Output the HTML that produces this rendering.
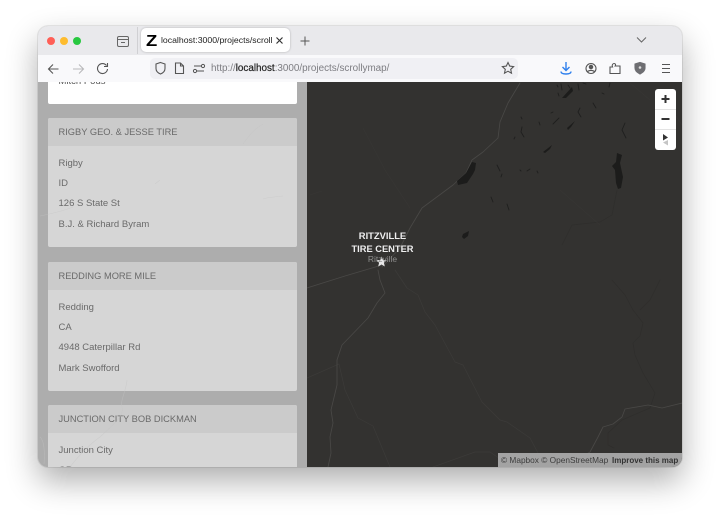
<!DOCTYPE html>
<html><head><meta charset="utf-8">
<style>
html,body{margin:0;padding:0;width:720px;height:517px;background:#fff;overflow:hidden;font-family:"Liberation Sans",sans-serif}
.win{position:absolute;left:38px;top:26px;width:644px;height:441px;border-radius:10px;box-shadow:0 0 0 1px rgba(0,0,0,.08),0 14px 32px rgba(0,0,0,.32)}
.clip{position:absolute;left:38px;top:26px;width:644px;height:441px;border-radius:10px;overflow:hidden;background:#adadad}
.abs{position:absolute}
.tabbar{position:absolute;left:0;top:0;width:644px;height:29px;background:#e9e9ec}
.nav{position:absolute;left:0;top:29px;width:644px;height:27px;background:#f9f9fb}
.dot{position:absolute;top:10.5px;width:8.5px;height:8.5px;border-radius:50%}
.tab{position:absolute;left:103px;top:2px;width:149px;height:24px;background:#fff;border-radius:5px;box-shadow:0 0 2px rgba(0,0,0,.25)}
.urlbar{position:absolute;left:112px;top:32px;width:368px;height:21px;background:#f0f0f4;border-radius:5px}
.left{position:absolute;left:0;top:56px;width:269px;height:385px;background:#adadad;overflow:hidden}
.map{position:absolute;left:269px;top:56px;width:375px;height:385px;background:#333230;overflow:hidden}
.card{position:absolute;left:10px;width:249px;height:129px;background:#d6d6d6;border-radius:2px;color:#6a6a6a;font-size:9.5px;overflow:hidden}
.card .h{height:28px;background:#cbcbcb;line-height:29.5px;padding-left:10.5px;font-size:9.3px;white-space:nowrap}
.card .r{position:absolute;left:10.5px;white-space:nowrap;line-height:12px}
</style></head><body>
<div class="win"></div>
<div class="clip">
  <div class="left">
    <div class="abs" style="left:10px;top:-20px;width:249px;height:42px;background:#fff;border-radius:2px"></div>
    <div class="abs" style="left:20.5px;top:-6px;font-size:9.5px;color:#555;line-height:12px">Mitch Pods</div>
    <div class="card" style="top:36px"><div class="h">RIGBY GEO. &amp; JESSE TIRE</div>
      <div class="r" style="top:39.5px">Rigby</div><div class="r" style="top:59.5px">ID</div><div class="r" style="top:80px">126 S State St</div><div class="r" style="top:100.5px">B.J. &amp; Richard Byram</div></div>
    <div class="card" style="top:180px"><div class="h">REDDING MORE MILE</div>
      <div class="r" style="top:39.5px">Redding</div><div class="r" style="top:59.5px">CA</div><div class="r" style="top:80px">4948 Caterpillar Rd</div><div class="r" style="top:100.5px">Mark Swofford</div></div>
    <div class="card" style="top:323px"><div class="h">JUNCTION CITY BOB DICKMAN</div>
      <div class="r" style="top:39.5px">Junction City</div><div class="r" style="top:59.5px">OR</div></div>
    <svg class="abs" style="left:0;top:0" width="269" height="385" fill="none" stroke="#c4c4c4" stroke-width=".6" opacity=".5">
      <path d="M2 134C12 132 25 129 35 125M205 62C210 55 215 48 225 42M225 117C230 115 238 115 245 114M122 98L117 102"/>
      <path d="M89 298C88 310 82 318 84 325C87 335 72 345 62 355C52 362 42 372 32 385M2 355C6 358 7 370 6 382"/>
    </svg>
  </div>
  <div class="map">
    <svg class="abs" style="left:-307px;top:-82px" width="720" height="517" fill="none" stroke-linejoin="round" stroke-linecap="round">
      <g stroke="#2f2e2c" stroke-width=".7">
        <path d="M612 280L625 295L633 310L643 323L640 336L633 343L635 355L643 373L655 393L650 408L622 420L608 433L608 445L614 448"/>
        <path d="M660 280L650 300L640 310M617 190L612 215L600 222L572 225L562 245"/>
      </g>
      <g stroke="#373634" stroke-width=".7">
        <path d="M410 208L385 170L363 128M310 195L322 191M630 83L650 100M672 110L682 125M560 190L600 225"/>
      </g>
      <g stroke="#3c3b39" stroke-width=".7">
        <path d="M395 270L407 288L418 295L425 312L435 325L455 362L463 365L482 402L500 420L507 422L530 438L538 453"/>
        <path d="M307 378L339 364L345 390L358 418L373 426L390 467"/>
        <path d="M433 467L475 452L490 452L503 461L520 459"/>
      </g>
      <g stroke="#494846" stroke-width=".85">
        <path d="M520 83L508 103L500 122L498 138L483 152L472 160L466 173L453 185L422 208L410 228L400 248L382 267"/>
        <path d="M382 265L345 276L307 288"/>
        <path d="M378 270L380 280L385 293L377 303L368 318L342 345L337 360L337 385L331 410L333 423L330 437L331 453L328 467"/>
        <path d="M682 403L662 408L648 405L625 409L622 417L613 424L603 427L598 437L590 452L580 458"/>
      </g>
      <g fill="#1c1c1b" stroke="none">
        <path d="M472 162L476 163L475 170L473 174L467 183L458 185L457 181L466 173Z"/>
        <path d="M617 153L622 155L620 163L623 177L621 188L618 189L616 183L615 170L612 166L616 162Z"/>
        <path d="M463 234L469 231L468 236L464 239L462 237Z"/>
        <path d="M543 152L552 145L550 149L545 153Z"/>
        <path d="M567 128L575 121L571 127L568 130Z"/>
        <path d="M562 98L572 87L573 91L566 98Z"/>
      </g>
      <g stroke="#1f1f1e" stroke-width=".9">
        <path d="M551 113L553 112M580 108L578 112L581 117M593 103L596 108M553 124L559 118"/>
        <path d="M625 123L622 130L626 138M521 117L522 119M539 122L540 125M522 127L521 132L524 137M514 139L515 137"/>
        <path d="M497 165L500 171M502 174L501 177M520 170L521 171M527 171L530 169M537 171L538 173M491 197L493 202M507 204L509 210"/>
        <path d="M557 85L558 87M561 84L562 90M568 85L570 88M578 84L579 90M583 83L586 84M610 83L609 87M602 93L604 94M558 93L559 96"/>
      </g>
      <path d="M381.500 256.500l1.500 3.500 3.800 .3-2.900 2.500 .9 3.700-3.300-2-3.300 2 .9-3.700-2.900-2.500 3.800-.3z" fill="#e8e8e8"/>
      <g font-family="Liberation Sans, DejaVu Sans, sans-serif" text-anchor="middle">
        <text x="382.500" y="262" font-size="8.500" fill="#8d8d8c">Ritzville</text>
        <text x="382.500" y="239" font-size="9.400" font-weight="bold" fill="#efefef">RITZVILLE</text>
        <text x="382.500" y="252" font-size="9.300" font-weight="bold" fill="#efefef">TIRE CENTER</text>
      </g>
    </svg>
    <div class="abs" style="left:348px;top:7px;width:21px;height:61px;background:#fff;border-radius:3px"></div>
    <div class="abs" style="left:348px;top:27px;width:21px;height:1px;background:#e3e3e3"></div>
    <div class="abs" style="left:348px;top:47px;width:21px;height:1px;background:#e3e3e3"></div>
    <svg class="abs" style="left:348px;top:7px" width="21" height="61">
      <path d="M6.500 10h8M10.500 6v8M6.500 30h8" stroke="#333" stroke-width="2"/>
      <path d="M8 45l5 3.500-5 3z" fill="#333"/>
      <path d="M13 51v5.500l-5-3z" fill="#c5c5c5"/>
    </svg>
    <div class="abs" style="left:191px;top:371px;width:184px;height:14px;background:#a3a3a3;color:#3d3d3d;font-size:8.300px;line-height:15px;white-space:nowrap;padding-left:3px;box-sizing:border-box">© Mapbox © OpenStreetMap<b style="color:#333;font-size:8px;position:absolute;left:114px">Improve this map</b></div>
  </div>
  <div class="tabbar"></div>
  <div class="nav"></div>
  <div class="abs" style="left:79px;top:10px;width:10px;height:9px;border:1.200px solid #666;border-radius:2px;box-sizing:content-box"></div>
  <div class="abs" style="left:79px;top:13px;width:11px;height:1px;background:#666"></div>
  <div class="abs" style="left:83px;top:15.500px;width:4px;height:1px;background:#666"></div>
  <div class="abs" style="left:99px;top:1px;width:1px;height:27px;background:#d0d0d3"></div>
  <div class="dot" style="left:8.500px;background:#ff5f57"></div>
  <div class="dot" style="left:21.700px;background:#febc2e"></div>
  <div class="dot" style="left:34.800px;background:#28c840"></div>
  <div class="tab">
    <div class="abs" style="left:4.500px;top:3.500px;font:bold 16px/20px 'Liberation Sans',sans-serif;color:#000;transform:scaleX(1.150);transform-origin:left">Z</div>
    <div class="abs" style="left:20px;top:0;width:111px;height:24px;overflow:hidden;font-size:8.700px;line-height:24px;color:#222;white-space:nowrap">localhost:3000/projects/scrollymap/</div>
    <svg class="abs" style="left:134px;top:7.500px" width="9" height="9"><path d="M1.500 1.500l6 6M7.500 1.500l-6 6" stroke="#333" stroke-width="1.200"/></svg>
  </div>
  <svg class="abs" style="left:261px;top:9px" width="12" height="12"><path d="M6 1.500v9M1.500 6h9" stroke="#555" stroke-width="1"/></svg>
  <svg class="abs" style="left:598px;top:10px" width="11" height="8" fill="none"><path d="M1 1.500l4.500 4.500 4.500-4.500" stroke="#666" stroke-width="1"/></svg>
  <svg class="abs" style="left:0;top:29px" width="112" height="27" fill="none" stroke="#555" stroke-width="1.100">
    <path d="M20.500 14H11M15 9.500L10.500 14 15 18.500"/>
    <path d="M35 14H45M41 9.500L45.500 14 41 18.500" stroke="#b9b9bb"/>
    <path d="M68.500 10.500A5 5 0 1 0 69.500 14M69.500 8v3.500h-3.500"/>
  </svg>
  <div class="urlbar"></div>
  <svg class="abs" style="left:112px;top:31px" width="58" height="22" fill="none" stroke="#555" stroke-width="1.100">
    <path d="M10.500 5.500L15 7v4.500c0 3-2 4.500-4.500 5.500C8 16 6 14.500 6 11.500V7z"/>
    <path d="M25.500 6h5l3 3v7.500h-8zM30.500 6v3h3"/>
    <path d="M44 9h7M47 14h7" stroke-width="1"/><circle cx="53" cy="9" r="1.600" stroke-width="1"/><circle cx="45" cy="14" r="1.600" stroke-width="1"/>
  </svg>
  <div class="abs" style="left:173px;top:32px;height:21px;line-height:22px;font-size:9.900px;color:#7d7d82;white-space:nowrap">http://<span style="color:#222;-webkit-text-stroke:.2px #222">localhost</span>:3000/projects/scrollymap/</div>
  <svg class="abs" style="left:460px;top:29px" width="184" height="27" fill="none" stroke="#555" stroke-width="1.100">
    <path d="M10 7.500l1.700 3.600 3.900 .5-2.900 2.700 .8 3.900-3.500-2-3.500 2 .8-3.900-2.900-2.700 3.900-.5z"/>
    <path d="M68 7v8M64.500 12l3.500 3.500 3.500-3.500M63 16.500c0 2 2 2.500 5 2.500s5-.5 5-2.500" stroke="#2f80ed" stroke-width="1.400"/>
    <circle cx="93" cy="13.500" r="5"/><circle cx="93" cy="12" r="1.700" fill="#555"/><path d="M89.500 16.500c2-1.500 5-1.500 7 0" stroke-width="1.300"/>
    <path d="M112 18.500V12h2.500c-1-2 .5-3.500 1.500-3.500 1.500 0 2 1.500 1.200 2.500H122v7.500z" stroke-width="1.100"/>
    <path d="M137 9l5-1.500 5 1.500v4c0 3-2.500 4.500-5 6-2.500-1.500-5-3-5-6z" fill="#6e6e72" stroke="#6e6e72"/>
    <circle cx="142" cy="12.500" r="1.300" fill="#ddd" stroke="none"/>
    <path d="M164 9.500h8M164 13.500h8M164 17.500h8" stroke-width="1"/>
  </svg>
</div>
</body></html>
